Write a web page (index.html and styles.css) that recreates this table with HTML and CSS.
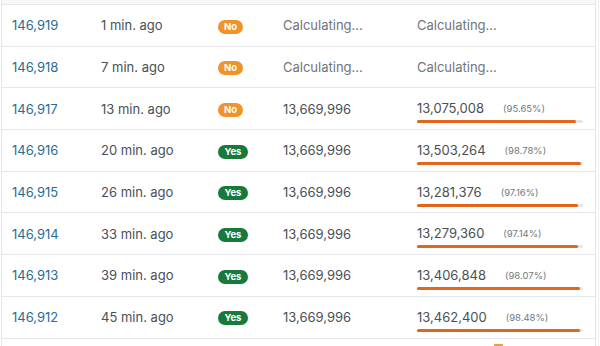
FILE: index.html
```html
<!DOCTYPE html>
<html>
<head>
<meta charset="utf-8">
<link rel="stylesheet" href="styles.css">
</head>
<body>
<div class="frame">
<div class="card">
  <div class="head"></div>
  <div class="row">
    <div class="c id">146,919</div><div class="c time">1 min. ago</div>
    <div class="c"><span class="badge no">No</span></div>
    <div class="c calc">Calculating...</div><div class="c calc">Calculating...</div>
  </div>
  <div class="row">
    <div class="c id">146,918</div><div class="c time">7 min. ago</div>
    <div class="c"><span class="badge no">No</span></div>
    <div class="c calc">Calculating...</div><div class="c calc">Calculating...</div>
  </div>
  <div class="row">
    <div class="c id">146,917</div><div class="c time">13 min. ago</div>
    <div class="c"><span class="badge no">No</span></div>
    <div class="c num">13,669,996</div>
    <div class="c num"><div class="val">13,075,008<span class="pct">(95.65%)</span></div><div class="track"><div class="fill" style="width:95.65%"></div></div></div>
  </div>
  <div class="row">
    <div class="c id">146,916</div><div class="c time">20 min. ago</div>
    <div class="c"><span class="badge yes">Yes</span></div>
    <div class="c num">13,669,996</div>
    <div class="c num"><div class="val">13,503,264<span class="pct">(98.78%)</span></div><div class="track"><div class="fill" style="width:98.78%"></div></div></div>
  </div>
  <div class="row">
    <div class="c id">146,915</div><div class="c time">26 min. ago</div>
    <div class="c"><span class="badge yes">Yes</span></div>
    <div class="c num">13,669,996</div>
    <div class="c num"><div class="val">13,281,376<span class="pct">(97.16%)</span></div><div class="track"><div class="fill" style="width:97.16%"></div></div></div>
  </div>
  <div class="row">
    <div class="c id">146,914</div><div class="c time">33 min. ago</div>
    <div class="c"><span class="badge yes">Yes</span></div>
    <div class="c num">13,669,996</div>
    <div class="c num"><div class="val">13,279,360<span class="pct">(97.14%)</span></div><div class="track"><div class="fill" style="width:97.14%"></div></div></div>
  </div>
  <div class="row">
    <div class="c id">146,913</div><div class="c time">39 min. ago</div>
    <div class="c"><span class="badge yes">Yes</span></div>
    <div class="c num">13,669,996</div>
    <div class="c num"><div class="val">13,406,848<span class="pct">(98.07%)</span></div><div class="track"><div class="fill" style="width:98.07%"></div></div></div>
  </div>
  <div class="row">
    <div class="c id">146,912</div><div class="c time">45 min. ago</div>
    <div class="c"><span class="badge yes">Yes</span></div>
    <div class="c num">13,669,996</div>
    <div class="c num"><div class="val">13,462,400<span class="pct">(98.48%)</span></div><div class="track"><div class="fill" style="width:98.48%"></div></div></div>
  </div>
  <div class="tailrow">
    <span class="peek"></span>
  </div>
</div>
</div>
</body>
</html>
```

FILE: styles.css
```css
html, body {
  margin: 0;
  padding: 0;
  background: #fff;
  overflow: hidden;
}
body {
  font-family: Inter, "Noto Sans", sans-serif;
  font-size: 13px;
  color: #495057;
}
.frame {
  width: 599px;
  height: 346px;
  box-sizing: border-box;
  border-right: 1px solid #eceef0;
  overflow: hidden;
}
.card {
  width: 595px;
  margin-left: 1px;
  border-left: 1px solid #e3e6ea;
  border-right: 1px solid #e3e6ea;
  box-sizing: border-box;
  height: 346px;
}
.head {
  height: 4px;
  background: #f6f7f9;
  border-bottom: 1px solid #e6e8eb;
}
.row {
  display: grid;
  grid-template-columns: 89px 117px 65px 134px 1fr;
  align-items: center;
  height: 41.7px;
  box-sizing: border-box;
  border-bottom: 1px solid #e6e8eb;
  padding-left: 10px;
}
.c {
  line-height: 16px;
  white-space: nowrap;
}
.id {
  color: #2a6c95;
}
.time {
  color: #4a4f55;
}
.calc {
  color: #6f757b;
}
.num {
  color: #4a4f55;
}
.badge {
  display: inline-block;
  height: 14px;
  line-height: 14px;
  border-radius: 7px;
  color: #fff;
  font-size: 9.5px;
  font-weight: 700;
  vertical-align: middle;
}
.badge.no {
  background: #f0932b;
  padding: 0 6px;
}
.badge.yes {
  background: #177a3c;
  padding: 0 6.5px;
}
.val {
  line-height: 16px;
}
.pct {
  font-size: 9.5px;
  color: #707880;
  margin-left: 19px;
  vertical-align: 1px;
}
.track {
  width: 166px;
  height: 3px;
  margin-top: 3px;
  margin-bottom: -6px;
  background: #e4e6e9;
  border-radius: 2px;
}
.fill {
  height: 3px;
  background: #e2661c;
  border-radius: 2px;
}
.tailrow {
  padding: 5px 0 0 492px;
}
.peek {
  display: block;
  width: 9px;
  height: 3px;
  background: #e8a23a;
  border-radius: 1px;
}
```
